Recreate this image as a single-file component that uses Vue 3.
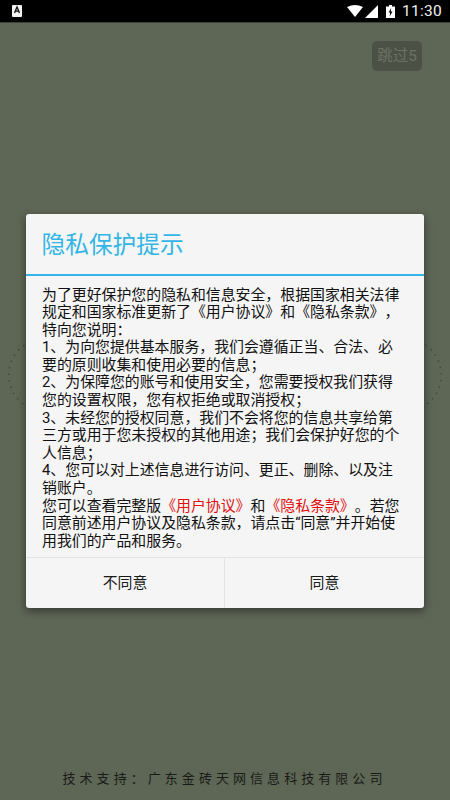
<script setup>
const lines = [
  [{ t: '为了更好保护您的隐私和信息安全，根据国家相关法律' }],
  [{ t: '规定和国家标准更新了《用户协议》和《隐私条款》，' }],
  [{ t: '特向您说明：' }],
  [{ t: '1、为向您提供基本服务，我们会遵循正当、合法、必' }],
  [{ t: '要的原则收集和使用必要的信息；' }],
  [{ t: '2、为保障您的账号和使用安全，您需要授权我们获得' }],
  [{ t: '您的设置权限，您有权拒绝或取消授权；' }],
  [{ t: '3、未经您的授权同意，我们不会将您的信息共享给第' }],
  [{ t: '三方或用于您未授权的其他用途；我们会保护好您的个' }],
  [{ t: '人信息；' }],
  [{ t: '4、您可以对上述信息进行访问、更正、删除、以及注' }],
  [{ t: '销账户。' }],
  [
    { t: '您可以查看完整版' },
    { t: '《用户协议》', kind: 'red' },
    { t: '和' },
    { t: '《隐私条款》', kind: 'red' },
    { t: '。若您' }
  ],
  [{ t: '同意前述用户协议及隐私条款，请点击“同意”并开始使' }],
  [{ t: '用我们的产品和服务。' }]
]
</script>

<template>
  <div class="screen">
    <header class="status">
      <svg class="notif" viewBox="0 0 10 12" width="10" height="12">
        <rect width="10" height="12" rx="1" fill="#f2f2f2" />
        <path d="M2.5 8 L5 2 L7.5 8 M3.4 6.2 H6.6" fill="none" stroke="#111" stroke-width="1.3" />
      </svg>
      <div class="status-right">
        <svg class="wifi" viewBox="0 0 16 12" width="16" height="12">
          <path d="M0 2 Q8 -2 16 2 L8 12 Z" fill="#fff" />
        </svg>
        <svg class="signal" viewBox="0 0 13 13" width="13" height="13">
          <path d="M13 0 V13 H0 Z" fill="#fff" />
        </svg>
        <svg class="batt" viewBox="0 0 9 13" width="9" height="13">
          <path d="M3 0 H6 V1.5 H9 V13 H0 V1.5 H3 Z" fill="#fff" />
          <path d="M5.2 3 L2.6 7.6 H4.2 L3.6 11.4 L6.5 6.4 H4.8 Z" fill="#000" />
        </svg>
        <span class="clock">11:30</span>
      </div>
    </header>

    <main class="splash">
      <div class="skip-row">
        <span class="skip">跳过5</span>
      </div>
      <svg class="ring" viewBox="0 0 434 74" width="434" height="74">
        <rect x="0.75" y="0.75" width="432.5" height="72.5" rx="36" fill="none" stroke="#3a5236" stroke-width="1.5" stroke-dasharray="1.6 5.1" />
      </svg>
      <p class="support">技术支持：广东金砖天网信息科技有限公司</p>
    </main>

    <section class="dialog">
      <h1 class="title">隐私保护提示</h1>
      <div class="body">
        <div v-for="(line, i) in lines" :key="i" class="line">
          <span v-for="(part, j) in line" :key="j" :class="part.kind">{{ part.t }}</span>
        </div>
      </div>
      <footer class="actions">
        <button class="action">不同意</button>
        <button class="action">同意</button>
      </footer>
    </section>
  </div>
</template>

<style>
html, body { margin: 0; padding: 0; background: #5e6656; }
</style>

<style scoped>
.screen {
  position: relative;
  width: 450px;
  height: 800px;
  display: flex;
  flex-direction: column;
  overflow: hidden;
  font-family: "Noto Sans CJK SC", "Noto Sans", sans-serif;
  background: #5e6656;
  text-spacing-trim: space-all;
}
.status {
  height: 22px;
  flex: none;
  background: #000;
  display: flex;
  align-items: center;
  justify-content: space-between;
  padding: 0 8px 0 12px;
  border-bottom: 1px solid #3c4238;
}
.notif { display: block; }
.status-right {
  display: flex;
  align-items: center;
}
.status-right svg { display: block; }
.signal { margin-left: 2px; }
.batt { margin-left: 8px; margin-right: 7px; }
.clock {
  font-family: Roboto, sans-serif;
  font-size: 15.5px;
  color: #f0f0f0;
  line-height: 22px;
  letter-spacing: 0.3px;
}
.splash {
  position: relative;
  flex: 1;
  display: flex;
  flex-direction: column;
}
.skip-row {
  display: flex;
  justify-content: flex-end;
  padding: 18px 28px 0 0;
}
.skip {
  width: 50px;
  height: 30px;
  border-radius: 5px;
  background: #4b5144;
  color: #6c7265;
  font-family: Roboto, "Noto Sans CJK SC", sans-serif;
  font-size: 15.5px;
  line-height: 30px;
  text-align: center;
  font-weight: 400;
}
.ring {
  position: absolute;
  left: 8px;
  top: 315px;
  display: block;
}
.support {
  margin: auto 0 13px;
  padding-right: 1px;
  text-align: center;
  color: #191c16;
  font-size: 13px;
  line-height: 18px;
  letter-spacing: 4.05px;
  white-space: nowrap;
}
.dialog {
  position: absolute;
  left: 26px;
  top: 214px;
  width: 398px;
  height: 394px;
  display: flex;
  flex-direction: column;
  background: #f5f5f5;
  border-radius: 3px;
  box-shadow: 0 3px 8px rgba(0, 0, 0, 0.45);
}
.title {
  flex: none;
  height: 60px;
  margin: 0;
  padding: 0 0 0 15.5px;
  border-bottom: 2px solid #33b5e5;
  color: #33b5e5;
  font-size: 23.7px;
  font-weight: 400;
  line-height: 58px;
}
.body {
  flex: 1;
  padding: 10.5px 0 0 16px;
  color: #111;
  font-family: Roboto, "Noto Sans CJK SC", sans-serif;
  font-size: 14.9px;
  line-height: 17.6px;
  white-space: nowrap;
}
.line { display: flex; height: 17.6px; }
.red { color: #e01010; }
.actions {
  flex: none;
  height: 50px;
  display: grid;
  grid-template-columns: 198px 1fr;
  border-top: 1px solid #e4e4e4;
}
.action {
  border: 0;
  padding: 0 0 3px;
  background: transparent;
  color: #1a1a1a;
  font-family: inherit;
  font-size: 14.9px;
}
.action + .action { border-left: 1px solid #e4e4e4; }
</style>
